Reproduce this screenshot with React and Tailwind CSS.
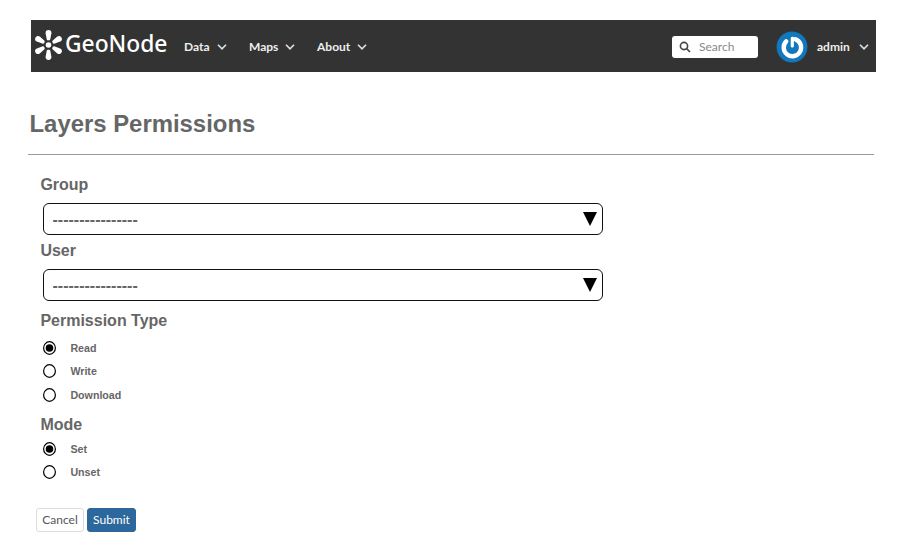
const sans = "font-['Liberation_Sans',Arial,sans-serif]";
const lato = "font-['Lato',sans-serif]";

function Chevron() {
  return (
    <svg viewBox="0 0 10 8" className="h-2 w-2.5" fill="none" stroke="#e0e0e0" strokeWidth="1.6">
      <path d="M1 1.8 5 5.9 9 1.8" />
    </svg>
  );
}

function Logo() {
  return (
    <svg viewBox="0 0 30 32" className="mb-[3px] h-8 w-[30px]" fill="white">
      <g transform="translate(14.5 16)">
        {[0, 60, 120, 180, 240, 300].map((angle) => (
          <path
            key={angle}
            transform={`rotate(${angle})`}
            d="M-1.7 -5.6 L-2.9 -11.8 C-3.2 -13.8 -1.8 -15 0 -15 C1.8 -15 3.2 -13.8 2.9 -11.8 L1.7 -5.6 C1.3 -4.4 -1.3 -4.4 -1.7 -5.6Z"
          />
        ))}
        <circle r="2.8" />
      </g>
    </svg>
  );
}

function Avatar() {
  return (
    <svg viewBox="0 0 32 32" className="h-8 w-8" fill="none">
      <circle cx="16" cy="16" r="15.4" fill="#1278bd" />
      <g stroke="white" strokeLinecap="round" strokeLinejoin="round">
        <path d="M10.2 10.4A8.7 8.7 0 1 0 19.6 8.4" strokeWidth="4.4" />
        <path d="M20.4 8.6 16.3 7.4V15" strokeWidth="3.2" />
      </g>
    </svg>
  );
}

function NavItem({ label, className }) {
  return (
    <div className={`flex items-center justify-between ${className}`}>
      <span>{label}</span>
      <Chevron />
    </div>
  );
}

function SelectBox() {
  return (
    <div className="ml-[3px] flex h-8 w-[560px] items-center justify-between rounded-md border border-[#111] pr-[5px] pl-[8.5px]">
      <span className="pt-px text-[16px] leading-4">----------------</span>
      <svg viewBox="0 0 14 14" className="h-3.5 w-3.5" fill="black">
        <path d="M0 0H14L7 14Z" />
      </svg>
    </div>
  );
}

function Radio({ label, checked, className }) {
  return (
    <div className={`flex items-center gap-3.5 pl-[3px] ${className}`}>
      <svg viewBox="0 0 13 14" className="mb-px h-3.5 w-[13px]">
        <ellipse cx="6.5" cy="7" rx="5.9" ry="6.3" fill="white" stroke="black" strokeWidth="1.2" />
        {checked && <circle cx="6.5" cy="7" r="3.8" fill="black" />}
      </svg>
      <span className="pl-[0.4px] text-[10.67px] leading-none">{label}</span>
    </div>
  );
}

export default function App() {
  return (
    <div className={`h-[549px] w-[902px] bg-white pt-5 font-bold text-[#666] ${sans}`}>
      <header className={`ml-[31px] flex h-[52px] w-[845px] items-center bg-[#333] pt-px pr-[7px] pl-[3px] text-[12px] text-[#eee] ${lato}`}>
        <Logo />
        <span className="mb-[5px] ml-[1px] w-[119px] font-['Noto_Sans',sans-serif] text-[22.8px] leading-8 font-medium text-white">GeoNode</span>
        <NavItem label="Data" className="w-[43px]" />
        <NavItem label="Maps" className="ml-[22px] w-[46px]" />
        <NavItem label="About" className="ml-[22px] w-[50px]" />
        <div className="ml-auto flex h-[22px] w-[86px] items-center gap-2 rounded-[3px] bg-white pl-[7px] font-normal text-[#888]">
          <svg viewBox="0 0 12 12" className="h-3 w-3" fill="none" stroke="#444" strokeWidth="1.6">
            <circle cx="5" cy="5" r="3.6" />
            <path d="M7.6 7.6 11 11" />
          </svg>
          <span>Search</span>
        </div>
        <div className="mr-[9px] ml-[18px] pt-px">
          <Avatar />
        </div>
        <NavItem label="admin" className="w-[52px]" />
      </header>

      <h1 className="mt-[37px] ml-[29.5px] h-[45px] text-[23.9px] leading-[30px]">Layers Permissions</h1>
      <hr className="ml-7 w-[846px] border-[#999]" />

      <main className="pl-10">
        <h2 className="mt-5 h-7 pl-[0.4px] text-[16px] leading-5">Group</h2>
        <SelectBox />
        <h2 className="mt-1.5 h-7 pl-[0.4px] text-[16px] leading-5">User</h2>
        <SelectBox />
        <h2 className="mt-2.5 h-[26px] pl-[0.4px] text-[16px] leading-5">Permission Type</h2>
        <Radio label="Read" checked className="h-[23px]" />
        <Radio label="Write" className="h-[23px]" />
        <Radio label="Download" className="h-6" />
        <h2 className="mt-2 h-[23px] pl-[0.4px] text-[16px] leading-5">Mode</h2>
        <Radio label="Set" checked className="h-[23px]" />
        <Radio label="Unset" className="h-[23px]" />
      </main>

      <footer className={`mt-6 ml-9 flex gap-[3px] text-[12px] font-normal ${lato}`}>
        <button className="h-6 w-12 rounded-[3px] border border-[#ddd] bg-white text-[#555]">Cancel</button>
        <button className="h-6 w-[49px] rounded-[3px] border border-[#2c689c] bg-[#2c689c] text-white">Submit</button>
      </footer>
    </div>
  );
}
